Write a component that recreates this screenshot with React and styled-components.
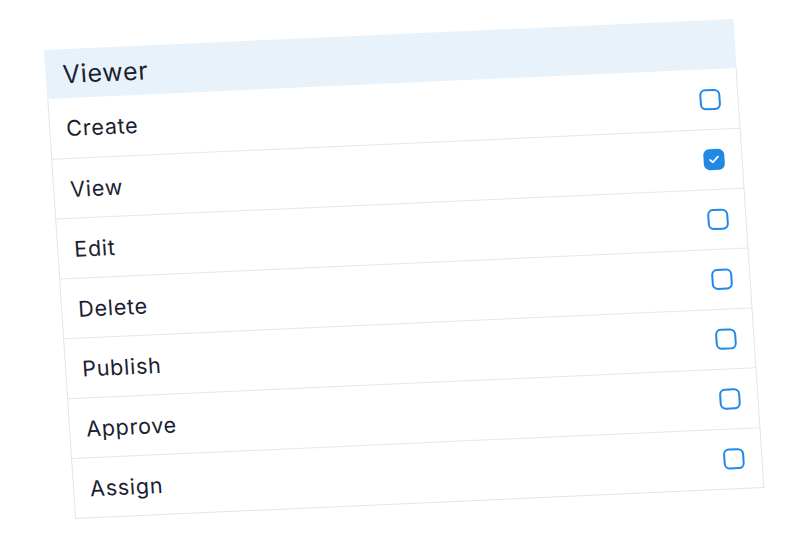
import React, { useState } from 'react';
import styled, { createGlobalStyle } from 'styled-components';

const GlobalStyle = createGlobalStyle`
    html, body {
        margin: 0;
        padding: 0;
        background: #ffffff;
    }
    body {
        width: 810px;
        height: 540px;
        overflow: hidden;
        font-family: Inter, "Noto Sans", "Liberation Sans", sans-serif;
    }
`;

const Stage = styled.div`
    width: 810px;
    height: 540px;
    padding: 50px 0 0 44px;
    box-sizing: border-box;
`;

// the card is drawn tilted, a little sheared
const Card = styled.div`
    width: 690px;
    background: #ffffff;
    transform-origin: 0 0;
    transform: matrix(0.999, -0.0449, 0.0661, 0.9978, 0, 0);
`;

const Header = styled.div`
    height: 49px;
    display: flex;
    align-items: center;
    padding: 0 16px 0 17px;
    background: #e8f2fb;
    color: #1b2130;
    font-size: 25px;
    font-weight: 400;
    letter-spacing: 0.7px;
`;

const List = styled.ul`
    list-style: none;
    margin: 0;
    padding: 0;
    border: 1px solid #e4e4e4;
    border-top: none;
`;

const Row = styled.li`
    height: 60px;
    box-sizing: border-box;
    display: flex;
    align-items: center;
    justify-content: space-between;
    padding: 0 17px 0 16px;
    border-top: ${({ $first }) => ($first ? 'none' : '1px solid #e6e6e6')};
    color: #1b2130;
    font-size: 21.5px;
    letter-spacing: 0.75px;
`;

const Box = styled.button`
    width: 21px;
    height: 21px;
    padding: 0;
    border-radius: 6px;
    box-sizing: border-box;
    border: 2px solid #2188e6;
    background: ${({ $checked }) => ($checked ? '#2188e6' : '#ffffff')};
    display: flex;
    align-items: center;
    justify-content: center;
    cursor: pointer;
`;

const perms = ['Create', 'View', 'Edit', 'Delete', 'Publish', 'Approve', 'Assign'];

const Checkbox = ({ checked, onToggle, label }) => (
    <Box type="button" $checked={checked} onClick={onToggle} aria-label={label} aria-pressed={checked}>
        {checked && (
            <svg width="11" height="9" viewBox="0 0 11 9">
                <polyline points="1.5,4.8 4.2,7.2 9.5,1.8" fill="none" stroke="#ffffff" strokeWidth="1.8" strokeLinecap="round" strokeLinejoin="round" />
            </svg>
        )}
    </Box>
);

const App = () => {
    const [checked, setChecked] = useState({ View: true });

    const toggle = (name) => setChecked((prev) => ({ ...prev, [name]: !prev[name] }));

    return (
        <>
            <GlobalStyle />
            <Stage>
                <Card>
                    <Header>Viewer</Header>
                    <List>
                        {perms.map((p, i) => (
                            <Row key={p} $first={i === 0}>
                                <span>{p}</span>
                                <Checkbox label={p} checked={!!checked[p]} onToggle={() => toggle(p)} />
                            </Row>
                        ))}
                    </List>
                </Card>
            </Stage>
        </>
    );
};

export default App;
